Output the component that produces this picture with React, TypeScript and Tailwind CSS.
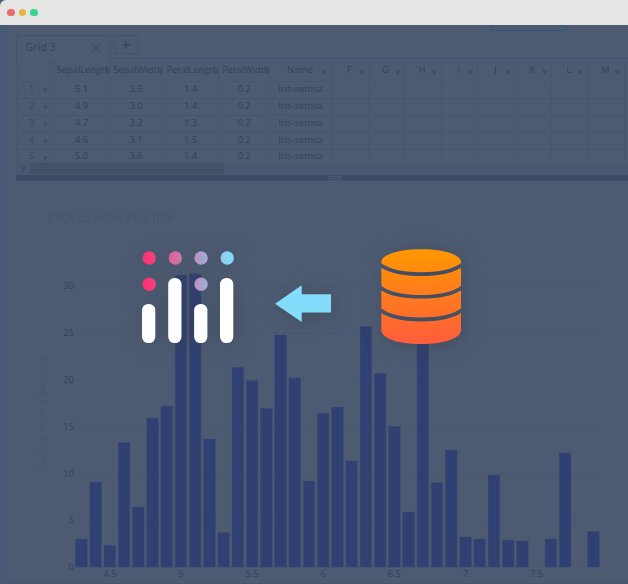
import React from "react";

const columns = ["SepalLength", "SepalWidth", "PetalLength", "PetalWidth", "Name", "F", "G", "H", "I", "J", "K", "L", "M"];
const rows = [
  ["5.1", "3.5", "1.4", "0.2"],
  ["4.9", "3.0", "1.4", "0.2"],
  ["4.7", "3.2", "1.3", "0.2"],
  ["4.6", "3.1", "1.5", "0.2"],
  ["5.0", "3.6", "1.4", "0.2"],
];

const BASELINE = 386;
const heights = [
  28, 85, 21.5, 124.5, 60, 149, 161, 292, 293, 128, 34.5, 199.5, 186.5, 158.5, 232, 189, 86, 153.5, 160, 106, 240.5,
  193.5, 140.5, 55, 237, 84.5, 117, 30, 28, 92, 27, 26, 0, 28, 114, 0, 35.5,
];

const gridCols =
  "grid grid-cols-[37px_56px_53px_56px_51px_62px_36.5px_36.5px_36.5px_36.5px_37px_36.5px_36.5px_36.5px]";

function Caret({ className = "" }: { className?: string }) {
  return (
    <svg className={className} width="5" height="5" viewBox="0 0 5 5">
      <path d="M0 .3h5L2.5 5z" fill="#3f4d68" />
    </svg>
  );
}

function TitleBar() {
  return (
    <div className="h-[25px] shrink-0 bg-[#485a75]">
      <div className="flex h-full items-center gap-[3.6px] rounded-tl-[6px] bg-[#e5e5e4] pl-[7.3px]">
        <span className="size-[7.7px] rounded-full bg-[#ea6b6b]" />
        <span className="size-[7.7px] rounded-full bg-[#dfb942]" />
        <span className="size-[7.7px] rounded-full bg-[#36d58a]" />
      </div>
    </div>
  );
}

function Tabs() {
  return (
    <div className="flex h-[27px]">
      <div className="flex w-[95px] items-center justify-between rounded-t-[2px] border border-b-0 border-[#445270] pr-[10px] pb-[3px] pl-[8.5px] text-[10.6px] text-[#36435b]">
        <span>Grid 3</span>
        <svg width="8" height="8" viewBox="0 0 8 8" stroke="#37445c" strokeWidth="1">
          <path d="M.7.7l6.6 6.6M7.3.7L.7 7.3" />
        </svg>
      </div>
      <div className="mb-[3px] flex-1 border-b border-[#455370] pl-[3px]">
        <div className="flex h-[19px] w-[24px] items-center justify-center rounded-[2px] border border-[#445270]">
          <svg width="8" height="8" viewBox="0 0 8 8" stroke="#3a4863" strokeWidth="1.6">
            <path d="M4 0v8M0 4h8" />
          </svg>
        </div>
      </div>
    </div>
  );
}

function DataGrid() {
  return (
    <div className="h-[100px] overflow-hidden border-t border-l border-[#465570] text-[9.4px] leading-none text-[#344058]">
      <div className={`${gridCols} h-[19px]`}>
        <div className="border-r border-b border-[#465570]" />
        {columns.map((name, i) => (
          <div
            key={name}
            className="flex items-center justify-center overflow-hidden border-r border-b border-[#465570] pb-[4px]"
          >
            {i < 4 ? (
              <>
                <span className="pl-[4px] whitespace-nowrap">{name}</span>
                <Caret className="mt-1 -ml-[5px] shrink-0" />
              </>
            ) : (
              <>
                <span className="flex-1 pl-[8px] text-center">{name}</span>
                <Caret className="mt-[5px] mr-1 shrink-0" />
              </>
            )}
          </div>
        ))}
      </div>
      {rows.map((row, r) => (
        <div key={r} className={`${gridCols} h-[17px] nth-[6]:h-[16px]`}>
          <div className="flex items-center justify-between border-r border-b border-[#465570] pr-[5px] pb-[3px] pl-[12px] text-[#3a4761]">
            <span>{r + 1}</span>
            <Caret className="mt-[4px]" />
          </div>
          {columns.map((name, i) => (
            <div key={name} className="flex items-center justify-center border-r border-b border-[#465570] pb-[3px]">
              {i < 4 ? row[i] : i === 4 ? "Iris-setosa" : ""}
            </div>
          ))}
        </div>
      ))}
    </div>
  );
}

function Chart() {
  return (
    <svg className="block" width="628" height="403" viewBox="0 0 628 403">
      <text x="48" y="40.7" fontSize="12.3" fill="#45536f">
        Click to enter Plot title
      </text>
      <text transform="translate(46 288.5) rotate(-90)" fontSize="10" fill="#46546f" textLength="113">
        Click to enter Y axis title
      </text>
      {[0, 5, 10, 15, 20, 25, 30].map((v) => (
        <g key={v}>
          <rect x="76" y={BASELINE - v * 9.36 - 0.5} width="525" height="1" fill="#495774" />
          <text x="74" y={BASELINE - v * 9.36 + 3.1} textAnchor="end" fontSize="9.4" fill="#344058">
            {v}
          </text>
        </g>
      ))}
      {heights.map((h, i) =>
        h ? (
          <rect
            key={i}
            x={75.6 + i * 14.225}
            y={BASELINE - h}
            width="11.6"
            height={h}
            fill="#314072"
            stroke="#3b4970"
            strokeWidth="0.5"
          />
        ) : null,
      )}
      {["4.5", "5", "5.5", "6", "6.5", "7", "7.5"].map((label, i) => (
        <text key={label} x={110 + i * 71.1} y="395.8" textAnchor="middle" fontSize="9.4" fill="#344058">
          {label}
        </text>
      ))}
      <rect y="402" width="628" height="1" fill="#475575" />
    </svg>
  );
}

const dots = [
  { x: 149.2, y: 258, fill: "url(#pink)" },
  { x: 175.3, y: 258, fill: "url(#rose)" },
  { x: 201.1, y: 258, fill: "url(#lilac)" },
  { x: 227.2, y: 258, fill: "url(#sky)" },
  { x: 149.2, y: 284.2, fill: "url(#pink)" },
  { x: 201.1, y: 284.2, fill: "url(#lilac)" },
];

const gradients = [
  ["pink", "#ff2f70", "#f04480"],
  ["rose", "#df5f99", "#c779ac"],
  ["lilac", "#bb91bf", "#a1acda"],
  ["sky", "#94cbee", "#82dcfa"],
];

function Artwork() {
  return (
    <svg className="pointer-events-none absolute inset-0" width="628" height="584" viewBox="0 0 628 584">
      <defs>
        {gradients.map(([id, from, to]) => (
          <linearGradient key={id} id={id}>
            <stop stopColor={from} />
            <stop offset="1" stopColor={to} />
          </linearGradient>
        ))}
        <linearGradient id="orange" gradientUnits="userSpaceOnUse" x1="0" y1="249" x2="0" y2="344">
          <stop stopColor="#ff9800" />
          <stop offset="1" stopColor="#ff5c3c" />
        </linearGradient>
        <filter id="shadow" x="-80%" y="-80%" width="260%" height="260%" colorInterpolationFilters="sRGB">
          <feDropShadow dx="2" dy="2" stdDeviation="10" floodColor="#363c44" floodOpacity="0.48" />
        </filter>
      </defs>
      <g filter="url(#shadow)">
        {dots.map((d) => (
          <circle key={`${d.x}-${d.y}`} cx={d.x} cy={d.y} r="6.7" fill={d.fill} />
        ))}
        <g fill="#fff">
          <rect x="142" y="304" width="13.3" height="39" rx="6.3" />
          <rect x="168.2" y="278" width="13.3" height="65" rx="6.3" />
          <rect x="194.1" y="304" width="13.3" height="39" rx="6.3" />
          <rect x="220" y="278" width="13.3" height="65" rx="6.3" />
        </g>
      </g>
      <path
        filter="url(#shadow)"
        fill="#83ddfa"
        d="M275 303.7L301.7 285.2V294.2H331V312.4H301.7V322z"
      />
      <g filter="url(#shadow)" fill="url(#orange)">
        <path d="M381.3 262C381.3 255 397 249.2 421.2 249.2S461 255 461 262V263.2C453 269 439 272.2 421.2 272.2S389 269 381.3 263.2z" />
        <path d="M381.3 267.7C390 273 403 276 421.2 276S452 273 461 267.7V285.7C453 292 439 295.1 421.2 295.1S389 292 381.3 285.7z" />
        <path d="M381.3 290.5C390 295.8 403 298.6 421.2 298.6S452 295.8 461 290.5V308.6C453 314.5 439 317.6 421.2 317.6S389 314.5 381.3 308.6z" />
        <path d="M381.3 313C390 318.3 403 321.5 421.2 321.5S452 318.3 461 313V330C461 338 445 344 421.2 344S381.3 338 381.3 330z" />
      </g>
    </svg>
  );
}

export default function App() {
  return (
    <div className="relative flex h-[584px] w-[628px] flex-col overflow-hidden bg-[#4d5b72] font-['Open_Sans','Noto_Sans',sans-serif]">
      <TitleBar />
      <div className="flex h-[559px] bg-[linear-gradient(90deg,#485a75_6px,#455570_6px,#455570_7px,#4d5b72_7px)]">
        <div className="flex w-full flex-col">
          <div className="h-[10px] pl-[490px]">
            <div className="h-[6px] w-[77px] rounded-b-[4px] border border-t-0 border-[#31587f]" />
          </div>
          <div className="ml-4 overflow-hidden">
            <Tabs />
            <DataGrid />
            <div className="flex h-[13px] items-center bg-[#4a586f] pl-[5px]">
              <svg width="9" height="7" viewBox="0 0 9 7">
                <path d="M4 .3v6.4L1 3.5z" fill="#3d4b65" />
              </svg>
              <div className="h-[11px] w-[194px] bg-[#435066]" />
            </div>
            <div className="flex h-[6px] flex-col items-center justify-center gap-px bg-[#3c4b69] pl-[26px]">
              <span className="h-px w-[14px] bg-[#4b5a72]" />
              <span className="h-px w-[14px] bg-[#4b5a72]" />
              <span className="h-px w-[14px] bg-[#4b5a72]" />
            </div>
          </div>
          <Chart />
        </div>
      </div>
      <Artwork />
    </div>
  );
}
